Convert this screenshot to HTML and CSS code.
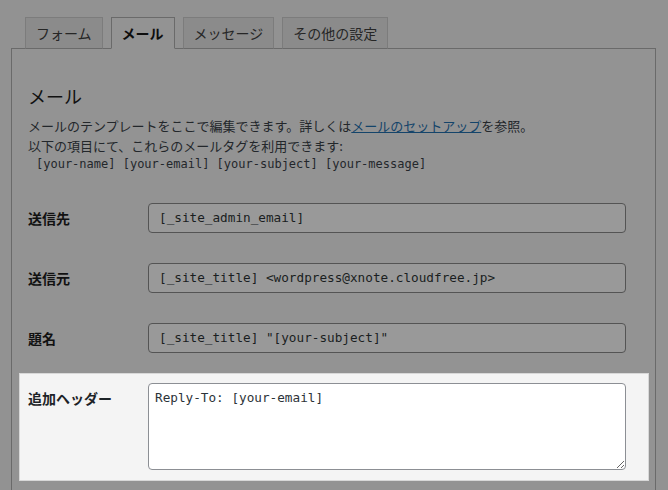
FILE: index.html
```html
<!DOCTYPE html>
<html lang="ja">
<head>
<meta charset="utf-8">
<title>メール設定</title>
<link rel="stylesheet" href="styles.css">
</head>
<body>
<div class="editor">
  <ul class="tabs">
    <li class="tab">フォーム</li>
    <li class="tab active">メール</li>
    <li class="tab">メッセージ</li>
    <li class="tab">その他の設定</li>
  </ul>
  <section class="panel">
    <h2 class="title">メール</h2>
    <p class="desc">メールのテンプレートをここで編集できます。詳しくは<a class="link" href="#">メールのセットアップ</a>を参照。<br>以下の項目にて、これらのメールタグを利用できます:</p>
    <div class="tags">[your-name] [your-email] [your-subject] [your-message]</div>
    <div class="rows">
      <div class="row">
        <label class="label">送信先</label>
        <div class="field">[_site_admin_email]</div>
      </div>
      <div class="row">
        <label class="label">送信元</label>
        <div class="field">[_site_title] &lt;wordpress@xnote.cloudfree.jp&gt;</div>
      </div>
      <div class="row">
        <label class="label">題名</label>
        <div class="field">[_site_title] "[your-subject]"</div>
      </div>
      <div class="row spot">
        <label class="label">追加ヘッダー</label>
        <textarea class="area">Reply-To: [your-email]</textarea>
      </div>
    </div>
  </section>
</div>
</body>
</html>
```

FILE: styles.css
```css
html, body {
  margin: 0;
  padding: 0;
  background: #929292;
  height: 100%;
  overflow: hidden;
}
body {
  font-family: "Noto Sans CJK JP", "Noto Sans", sans-serif;
  color: #141719;
}
.editor {
  box-sizing: border-box;
  height: 100vh;
  display: flex;
  flex-direction: column;
  padding: 17px 12px 0 11px;
}
.tabs {
  list-style: none;
  margin: 0 0 -1px 14px;
  padding: 0;
  display: flex;
  gap: 8px;
  position: relative;
  z-index: 1;
}
.tab {
  height: 30px;
  line-height: 30px;
  padding: 0 10px;
  font-size: 14px;
  color: #262626;
  background: #8b8b8b;
  border: 1px solid #7c7c7c;
  border-bottom-color: #6a6a6a;
}
.tab.active {
  font-weight: bold;
  color: #0e0e0e;
  background: #939393;
  border-color: #6a6a6a;
  border-bottom-color: #939393;
}
.panel {
  flex: 1;
  min-height: 0;
  overflow: hidden;
  background: #939393;
  border: 1px solid #6a6a6a;
  border-bottom: none;
  padding: 0 29px 0 16px;
}
.title {
  margin: 35px 0 0;
  font-size: 18px;
  line-height: 24px;
  font-weight: normal;
  color: #111;
}
.desc {
  margin: 8px 0 0;
  font-size: 13px;
  line-height: 20px;
  color: #23272b;
}
.link {
  color: #14446a;
  text-decoration: underline;
}
.tags {
  margin: 0 0 0 8px;
  font-family: "DejaVu Sans Mono", monospace;
  font-size: 12px;
  line-height: 16px;
  color: #23272b;
}
.rows {
  margin-top: 31px;
  display: flex;
  flex-direction: column;
}
.row {
  display: flex;
  align-items: flex-start;
  margin-bottom: 30px;
}
.label {
  width: 120px;
  flex: none;
  font-size: 14px;
  font-weight: bold;
  line-height: 30px;
  color: #111;
}
.field {
  flex: 1;
  height: 28px;
  line-height: 28px;
  padding: 0 10px;
  border: 1px solid #545454;
  border-radius: 4px;
  background: #999;
  font-family: "DejaVu Sans Mono", monospace;
  font-size: 12.7px;
  color: #1a1e21;
  white-space: nowrap;
}
.row.spot {
  margin: -10px -23px 0 -9px;
  padding: 9px 22px 10px 8px;
  background: #f4f4f4;
  border: 1px solid #d8d8d8;
}
.spot .label {
  color: #1d2327;
}
.area {
  flex: 1;
  height: 87px;
  box-sizing: border-box;
  margin: 0;
  padding: 5px 6px;
  border: 1px solid #8c8f94;
  border-radius: 4px;
  background: #fff;
  font-family: "DejaVu Sans Mono", monospace;
  font-size: 12.7px;
  line-height: 18px;
  color: #2c3338;
  resize: vertical;
}
```
